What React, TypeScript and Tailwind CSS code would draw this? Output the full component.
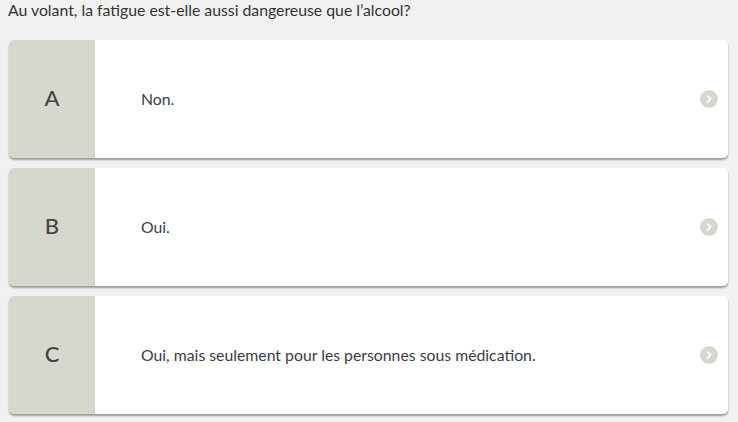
import { ChevronRight } from 'lucide-react'

const options = [
  { letter: 'A', text: 'Non.' },
  { letter: 'B', text: 'Oui.' },
  { letter: 'C', text: 'Oui, mais seulement pour les personnes sous médication.' },
]

export default function App() {
  return (
    <div className="min-h-[422px] bg-[#f1f1f1] font-['Lato',sans-serif] text-[#333]">
      <p className="px-[8px] text-[15.8px] leading-[20px]">
        Au volant, la fatigue est-elle aussi dangereuse que l’alcool?
      </p>

      <div className="mt-[20px] ml-[9px] w-[719px] flex flex-col gap-[10px]">
        {options.map(o => (
          <div
            key={o.letter}
            className="flex h-[118px] rounded-[5px] bg-white overflow-hidden shadow-[0_2px_2px_rgba(0,0,0,0.35)]"
          >
            <div className="w-[86px] flex items-center justify-center pb-[4px] bg-[#d6d8ce] text-[22px] font-medium text-[#444]">
              {o.letter}
            </div>
            <div className="flex-1 flex items-center pl-[46px] text-[15.8px] text-[#3b3b4a]">
              {o.text}
            </div>
            <div className="flex items-center pr-[10px]">
              <div className="w-[18px] h-[18px] rounded-full bg-[#d6d8ce] flex items-center justify-center">
                <ChevronRight size={12} strokeWidth={4} color="#fff" />
              </div>
            </div>
          </div>
        ))}
      </div>
    </div>
  )
}
